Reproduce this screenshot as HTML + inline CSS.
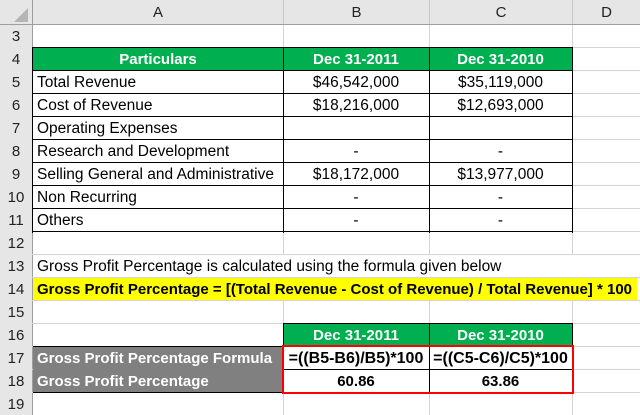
<!DOCTYPE html>
<html style="height:415px;overflow:hidden"><head><style>
body{margin:0;width:640px;height:415px;overflow:hidden;background:#fff;font-family:"Liberation Sans",Arial,sans-serif;font-size:15.5px;position:relative}
div{position:absolute;box-sizing:border-box}
.vl{width:1px;background:#d4d4d4;top:0;height:415px}
.hl{height:1px;background:#d4d4d4;left:0;width:640px}
.rh{left:0;width:32px;height:23px;background:#e6e6e6;text-align:center;line-height:23px;color:#222;font-size:15px}
.ch{top:0;height:24px;background:#e6e6e6;text-align:center;line-height:25px;color:#222;font-size:15px}
.c{height:23px;line-height:23px;white-space:nowrap;color:#000}
.b{font-weight:bold;font-size:15px}
.ctr{text-align:center}
.g{background:#00b050;color:#fff;font-weight:bold;text-align:center;font-size:15px}
.k{background:#000}
</style></head><body>
<div class="ch" style="left:0;width:32px"></div>
<div style="left:14px;top:8px;width:0;height:0;border-left:14px solid transparent;border-bottom:14px solid #b5b5b5"></div>
<div class="ch" style="left:33px;width:250px">A</div>
<div class="ch" style="left:284px;width:145px">B</div>
<div class="ch" style="left:430px;width:142px">C</div>
<div class="ch" style="left:573px;width:67px">D</div>
<div style="left:0;top:24px;width:640px;height:1px;background:#9e9e9e"></div>
<div style="left:32px;top:0;width:1px;height:415px;background:#9e9e9e"></div>
<div class="vl" style="left:283px;top:0;height:24px;background:#c8c8c8"></div>
<div class="vl" style="left:429px;top:0;height:24px;background:#c8c8c8"></div>
<div class="vl" style="left:572px;top:0;height:24px;background:#c8c8c8"></div>

<div class="vl" style="left:283px;top:25px;height:390px"></div>
<div class="vl" style="left:429px;top:25px;height:390px"></div>
<div class="vl" style="left:572px;top:25px;height:390px"></div>
<div class="hl" style="top:47px"></div><div class="hl" style="top:70px"></div><div class="hl" style="top:93px"></div><div class="hl" style="top:116px"></div><div class="hl" style="top:139px"></div><div class="hl" style="top:162px"></div><div class="hl" style="top:185px"></div><div class="hl" style="top:208px"></div><div class="hl" style="top:231px"></div><div class="hl" style="top:254px"></div><div class="hl" style="top:277px"></div><div class="hl" style="top:300px"></div><div class="hl" style="top:323px"></div><div class="hl" style="top:346px"></div><div class="hl" style="top:369px"></div><div class="hl" style="top:392px"></div>

<div class="rh" style="top:25px">3</div><div class="rh" style="top:48px">4</div><div class="rh" style="top:71px">5</div><div class="rh" style="top:94px">6</div><div class="rh" style="top:117px">7</div><div class="rh" style="top:140px">8</div><div class="rh" style="top:163px">9</div><div class="rh" style="top:186px">10</div><div class="rh" style="top:209px">11</div><div class="rh" style="top:232px">12</div><div class="rh" style="top:255px">13</div><div class="rh" style="top:278px">14</div><div class="rh" style="top:301px">15</div><div class="rh" style="top:324px">16</div><div class="rh" style="top:347px">17</div><div class="rh" style="top:370px">18</div><div class="rh" style="top:393px;height:22px">19</div>

<div style="left:33px;top:48px;width:540px;height:185px;background:#fff"></div>
<div class="c g" style="left:33px;top:48px;width:540px;height:23px"></div>
<div class="c g" style="left:33px;top:48px;width:250px">Particulars</div>
<div class="c g" style="left:283px;top:48px;width:146px">Dec 31-2011</div>
<div class="c g" style="left:429px;top:48px;width:143px">Dec 31-2010</div>
<div class="c" style="left:37px;top:71px">Total Revenue</div>
<div class="c" style="left:37px;top:94px">Cost of Revenue</div>
<div class="c" style="left:37px;top:117px">Operating Expenses</div>
<div class="c" style="left:37px;top:140px">Research and Development</div>
<div class="c" style="left:37px;top:163px">Selling General and Administrative</div>
<div class="c" style="left:37px;top:186px">Non Recurring</div>
<div class="c" style="left:37px;top:209px">Others</div>
<div class="c ctr" style="left:283px;top:71px;width:146px">$46,542,000</div>
<div class="c ctr" style="left:429px;top:71px;width:143px">$35,119,000</div>
<div class="c ctr" style="left:283px;top:94px;width:146px">$18,216,000</div>
<div class="c ctr" style="left:429px;top:94px;width:143px">$12,693,000</div>
<div class="c ctr" style="left:283px;top:140px;width:146px">-</div>
<div class="c ctr" style="left:429px;top:140px;width:143px">-</div>
<div class="c ctr" style="left:283px;top:163px;width:146px">$18,172,000</div>
<div class="c ctr" style="left:429px;top:163px;width:143px">$13,977,000</div>
<div class="c ctr" style="left:283px;top:186px;width:146px">-</div>
<div class="c ctr" style="left:429px;top:186px;width:143px">-</div>
<div class="c ctr" style="left:283px;top:209px;width:146px">-</div>
<div class="c ctr" style="left:429px;top:209px;width:143px">-</div>
<div class="k" style="left:32px;top:47px;width:1px;height:186px"></div>
<div class="k" style="left:283px;top:47px;width:1px;height:186px"></div>
<div class="k" style="left:429px;top:47px;width:1px;height:186px"></div>
<div class="k" style="left:572px;top:47px;width:1px;height:186px"></div>
<div class="k" style="left:32px;top:47px;width:541px;height:1px"></div>
<div class="k" style="left:32px;top:70px;width:541px;height:1px"></div>
<div class="k" style="left:32px;top:93px;width:541px;height:1px"></div>
<div class="k" style="left:32px;top:116px;width:541px;height:1px"></div>
<div class="k" style="left:32px;top:139px;width:541px;height:1px"></div>
<div class="k" style="left:32px;top:162px;width:541px;height:1px"></div>
<div class="k" style="left:32px;top:185px;width:541px;height:1px"></div>
<div class="k" style="left:32px;top:208px;width:541px;height:1px"></div>
<div class="k" style="left:32px;top:231px;width:541px;height:1px"></div>

<div style="left:33px;top:255px;width:560px;height:22px;background:#fff"></div>
<div class="c" style="left:37px;top:255px">Gross Profit Percentage is calculated using the formula given below</div>
<div style="left:33px;top:278px;width:604px;height:22px;background:#ffff00"></div>
<div class="c b" style="left:37px;top:278px">Gross Profit Percentage = [(Total Revenue - Cost of Revenue) / Total Revenue] * 100</div>

<div class="c g" style="left:283px;top:324px;width:146px">Dec 31-2011</div>
<div class="c g" style="left:429px;top:324px;width:143px">Dec 31-2010</div>
<div style="left:33px;top:347px;width:250px;height:46px;background:#808080"></div>
<div class="c b" style="left:37px;top:347px;color:#fff">Gross Profit Percentage Formula</div>
<div class="c b" style="left:37px;top:370px;color:#fff">Gross Profit Percentage</div>
<div style="left:283px;top:347px;width:290px;height:46px;background:#fff"></div>
<div class="c b ctr" style="left:283px;top:347px;width:146px;font-size:16px">=((B5-B6)/B5)*100</div>
<div class="c b ctr" style="left:429px;top:347px;width:143px;font-size:16px">=((C5-C6)/C5)*100</div>
<div class="c b ctr" style="left:283px;top:370px;width:146px">60.86</div>
<div class="c b ctr" style="left:429px;top:370px;width:143px">63.86</div>
<div class="k" style="left:283px;top:323px;width:290px;height:1px"></div>
<div class="k" style="left:283px;top:323px;width:1px;height:24px"></div>
<div class="k" style="left:429px;top:323px;width:1px;height:70px"></div>
<div class="k" style="left:572px;top:323px;width:1px;height:24px"></div>
<div class="k" style="left:33px;top:346px;width:540px;height:1px"></div>
<div class="k" style="left:283px;top:369px;width:290px;height:1px"></div>
<div class="k" style="left:33px;top:392px;width:250px;height:1px"></div>
<div style="left:282px;top:345px;width:292px;height:49px;border:2px solid #ff0000"></div>
</body></html>
